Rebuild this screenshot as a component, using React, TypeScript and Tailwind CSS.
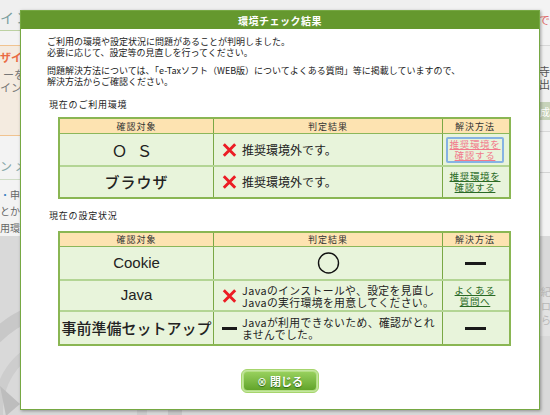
import React from "react";

function XMark() {
  return (
    <svg width="15" height="14" viewBox="0 0 15 14" className="shrink-0">
      <path d="M1.8 1.3 L13.2 12.7 M13.2 1.3 L1.8 12.7" stroke="#ec1c24" strokeWidth="2.9" strokeLinecap="butt" />
    </svg>
  );
}

function Dash({ w = 15 }: { w?: number }) {
  return <div className="h-[3px] bg-[#1a1a1a] shrink-0" style={{ width: w }} />;
}

function Circle() {
  return (
    <svg width="25" height="22" viewBox="0 0 25 22">
      <circle cx="12.5" cy="11" r="10" fill="none" stroke="#111" strokeWidth="1.4" />
    </svg>
  );
}

const c1 = "w-[153px] shrink-0 flex items-center justify-center";
const c2 = "w-[229px] shrink-0 border-l border-[#7aa845] flex items-center";
const c3 = "w-[65px] shrink-0 border-l border-[#7aa845] flex items-center justify-center";

function LinkText({ a, b, pink }: { a: string; b: string; pink?: boolean }) {
  return (
    <div
      className={
        "flex flex-col items-center text-[9.5px] leading-[11px] underline tracking-[0.7px] " +
        (pink ? "text-[#f27a8c] decoration-[#f27a8c]" : "text-[#2a6a25] decoration-[#2a6a25]")
      }
    >
      <span>{a}</span>
      <span>{b}</span>
    </div>
  );
}

export default function App() {
  return (
    <div className="relative w-[550px] h-[415px] overflow-hidden bg-[#efefef] font-['Noto_Sans_CJK_JP',sans-serif]">
      {/* background page */}
      <div className="flex flex-col h-full">
        <div className="flex h-[236px]">
          {/* left strip */}
          <div className="w-[120px] flex flex-col bg-[#f3f3f3]">
            <div className="h-[31px] border-b border-[#bcd1a2] bg-[#efefef] flex items-center text-[14px] text-[#7a9e9e] tracking-[2px] pt-[6px]">
              イン
            </div>
            <div className="mt-[14px] h-[91px] bg-[#f4ebe0] border-y border-[#f0c390] flex flex-col text-[11px] leading-[13px]">
              <span className="mt-[5px] text-[#ea6a44] font-bold">ザイ</span>
              <span className="mt-[4px] text-[#777] pl-[3px]">ーを</span>
              <span className="text-[#777]">イン</span>
            </div>
            <div className="mt-[21px] h-[23px] border-b border-[#cfdcc6] text-[12px] text-[#88a8a8] tracking-[3px]">ンメ</div>
            <div className="mt-[7px] flex flex-col text-[10px] leading-[16.5px] text-[#666]">
              <span>
                <span className="text-[#3a7ec2]">・</span>申請
              </span>
              <span>とから</span>
              <span>用環境</span>
            </div>
          </div>
          <div className="flex-1" />
          {/* right strip */}
          <div className="w-[120px] flex flex-col items-end bg-[#f3f3f3]">
            <div className="h-[31px] w-full flex justify-end items-center pt-[8px] text-[12px] text-[#e06a6a]">で</div>
            <div className="mt-[14px] w-full h-[87px] bg-[#f1f1f1] border-y border-[#d8d8d8] flex flex-col items-end text-[11px] leading-[13px] text-[#555]">
              <span className="mt-[19px]">寺</span>
              <span>出</span>
              <div className="mt-[11px] w-full h-[18px] bg-[#c7d3ba] flex justify-end items-center text-[10px] text-white">成</div>
            </div>
            <div className="mt-[40px] w-full border-b border-[#d4d4d4]" />
          </div>
        </div>
        <div className="flex-1 bg-[#d9d9d9] relative">
          <svg width="550" height="180" viewBox="0 0 550 180" className="block">
            <circle cx="70" cy="175" r="105" fill="none" stroke="#c8c8c8" strokeWidth="14" />
            <circle cx="70" cy="175" r="72" fill="none" stroke="#cdcdcd" strokeWidth="10" />
            <path d="M0 150 L20 168 L6 180" fill="#bdbdbd" />
            <rect x="539" y="55" width="11" height="45" fill="#e2e2e2" />
            <text x="541" y="60" fontSize="10" fill="#b8b8b8">紀</text>
            <text x="541" y="74" fontSize="10" fill="#b8b8b8">ロ</text>
            <text x="541" y="88" fontSize="10" fill="#b8b8b8">ら</text>
          </svg>
        </div>
      </div>

      {/* modal dialog overlay */}
      <div className="absolute left-[20px] top-[10px] w-[520px] h-[400px] bg-white border border-[#76a843] shadow-[1px_1px_3px_rgba(0,0,0,0.35)] flex flex-col">
        <div className="h-[18px] bg-[#65982e] text-white text-[10px] font-bold flex items-center justify-center tracking-[0.5px]">
          環境チェック結果
        </div>
        <div className="pl-[26px] pt-[7px] text-[9px] leading-[11px] text-[#222]">
          <p>
            ご利用の環境や設定状況に問題があることが判明しました。
            <br />
            必要に応じて、設定等の見直しを行ってください。
          </p>
          <p className="mt-[7px]">
            問題解決方法については、「e-Taxソフト（WEB版）についてよくある質問」等に掲載していますので、
            <br />
            解決方法からご確認ください。
          </p>
          <p className="mt-[12px] ml-[2px] tracking-[0.8px]">現在のご利用環境</p>
        </div>

        {/* table 1 */}
        <div className="mt-[7px] ml-[37px] w-[453px] border-2 border-[#8ab653] bg-[#e8f4db]">
          <div className="flex h-[15px] bg-[#fde3b1] border-b border-[#8cb75a] text-[9px] leading-[9px] text-[#333] tracking-[1px]">
            <div className={c1}>確認対象</div>
            <div className={c2 + " justify-center"}>判定結果</div>
            <div className={c3}>解決方法</div>
          </div>
          <div className="flex h-[33px] border-b-2 border-[#b3d594]">
            <div className={c1 + " text-[16px] text-[#222] tracking-[9px]"}>ＯＳ</div>
            <div className={c2 + " pl-[8px] gap-[5px] text-[12px] text-[#222]"}>
              <XMark />
              <span>推奨環境外です。</span>
            </div>
            <div className={c3}>
              <div className="border-2 border-[#86b3e3] rounded-[2px] px-[1px]">
                <LinkText a="推奨環境を" b="確認する" pink />
              </div>
            </div>
          </div>
          <div className="flex h-[30px]">
            <div className={c1 + " text-[15px] font-medium text-[#222] tracking-[1px]"}>ブラウザ</div>
            <div className={c2 + " pl-[8px] gap-[5px] text-[12px] text-[#222]"}>
              <XMark />
              <span>推奨環境外です。</span>
            </div>
            <div className={c3}>
              <LinkText a="推奨環境を" b="確認する" />
            </div>
          </div>
        </div>

        <p className="mt-[11px] pl-[28px] text-[9px] leading-[11px] text-[#222] tracking-[0.8px]">現在の設定状況</p>

        {/* table 2 */}
        <div className="mt-[10px] ml-[37px] w-[453px] border-2 border-[#8ab653] bg-[#e8f4db]">
          <div className="flex h-[14px] bg-[#fde3b1] border-b border-[#8cb75a] text-[9px] leading-[9px] text-[#333] tracking-[1px]">
            <div className={c1}>確認対象</div>
            <div className={c2 + " justify-center"}>判定結果</div>
            <div className={c3}>解決方法</div>
          </div>
          <div className="flex h-[34px] border-b-2 border-[#b3d594]">
            <div className={c1 + " text-[15px] text-[#222] font-['Liberation_Sans',sans-serif]"}>Cookie</div>
            <div className={c2 + " justify-center"}>
              <Circle />
            </div>
            <div className={c3}>
              <Dash w={21} />
            </div>
          </div>
          <div className="flex h-[31px] border-b-2 border-[#b3d594]">
            <div className={c1 + " text-[15px] text-[#222] font-['Liberation_Sans',sans-serif]"}>Java</div>
            <div className={c2 + " pl-[8px] gap-[5px] text-[10.8px] leading-[12px] text-[#222] tracking-[0.4px]"}>
              <XMark />
              <div className="flex flex-col">
                <span>Javaのインストールや、設定を見直し</span>
                <span>Javaの実行環境を用意してください。</span>
              </div>
            </div>
            <div className={c3}>
              <LinkText a="よくある" b="質問へ" />
            </div>
          </div>
          <div className="flex h-[32px]">
            <div className={c1 + " text-[15px] font-medium text-[#222]"}>事前準備セットアップ</div>
            <div className={c2 + " pl-[8px] gap-[5px] text-[10.8px] leading-[12px] text-[#222] tracking-[0.4px]"}>
              <Dash w={15} />
              <div className="flex flex-col">
                <span>Javaが利用できないため、確認がとれ</span>
                <span>ませんでした。</span>
              </div>
            </div>
            <div className={c3}>
              <Dash w={21} />
            </div>
          </div>
        </div>

        {/* close button */}
        <div className="mt-[23px] flex justify-center">
          <div className="w-[78px] h-[24px] rounded-[6px] border border-[#a6d56c] p-[1px] bg-[#c4e6a0]">
            <div className="w-full h-full rounded-[4px] bg-gradient-to-b from-[#97d05c] to-[#62a42a] border border-[#b4df85] flex items-center justify-center gap-[3px] text-white text-[11px] font-bold [text-shadow:0_1px_1px_rgba(0,60,0,0.6)]">
              <span className="text-[10px] text-[#e8f4e0]">⊗</span>
              <span>閉じる</span>
            </div>
          </div>
        </div>
      </div>
    </div>
  );
}
